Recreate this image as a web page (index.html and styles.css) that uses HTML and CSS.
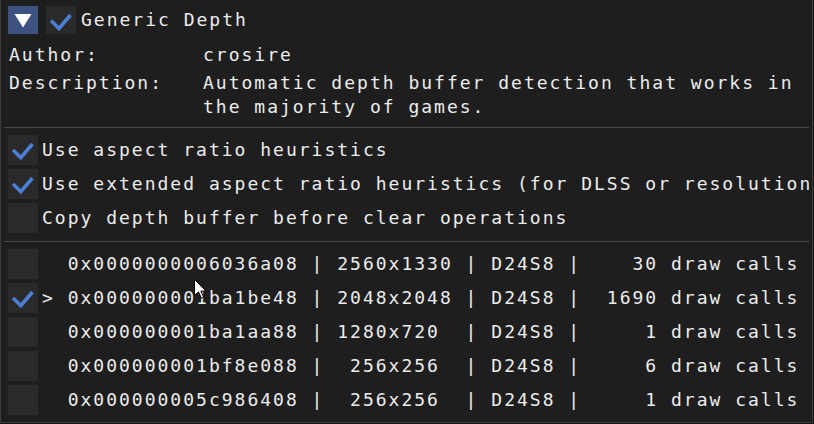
FILE: index.html
```
<!DOCTYPE html>
<html>
<head>
<meta charset="utf-8">
<link rel="stylesheet" href="styles.css">
</head>
<body>
<div class="window">
  <div class="content">
    <div class="header">
      <div class="tree-btn">
        <svg width="30" height="28" viewBox="0 0 30 28"><polygon points="6.5,8 23.5,8 15,21.5" fill="#ffffff"/></svg>
      </div>
      <div class="check hdr">
        <svg width="30" height="28" viewBox="0 0 30 28"><polyline points="5,14.5 13,22.5 24.5,9" fill="none" stroke="#4b7fd6" stroke-width="3.6"/></svg>
      </div>
      <span class="label">Generic Depth</span>
    </div>

    <div class="info">
      <div class="info-row"><span class="key">Author:</span><span class="val">crosire</span></div>
      <div class="info-row"><span class="key">Description:</span><span class="val wrap">Automatic depth buffer detection that works in the majority of games.</span></div>
    </div>

    <div class="sep"></div>

    <div class="list">
      <div class="row">
        <div class="check"><svg width="30" height="30" viewBox="0 0 30 30"><polyline points="5,15 12.8,22.6 24.5,9" fill="none" stroke="#4b7fd6" stroke-width="3.6"/></svg></div>
        <span class="label">Use aspect ratio heuristics</span>
      </div>
      <div class="row">
        <div class="check"><svg width="30" height="30" viewBox="0 0 30 30"><polyline points="5,15 12.8,22.6 24.5,9" fill="none" stroke="#4b7fd6" stroke-width="3.6"/></svg></div>
        <span class="label">Use extended aspect ratio heuristics (for DLSS or resolution scaling)</span>
      </div>
      <div class="row">
        <div class="check"></div>
        <span class="label">Copy depth buffer before clear operations</span>
      </div>
    </div>

    <div class="sep"></div>

    <div class="list">
      <div class="row">
        <div class="check"></div>
        <span class="label">  0x0000000006036a08 | 2560x1330 | D24S8 |    30 draw calls</span>
      </div>
      <div class="row">
        <div class="check"><svg width="30" height="30" viewBox="0 0 30 30"><polyline points="5,15 12.8,22.6 24.5,9" fill="none" stroke="#4b7fd6" stroke-width="3.6"/></svg></div>
        <span class="label">&gt; 0x000000001ba1be48 | 2048x2048 | D24S8 |  1690 draw calls</span>
      </div>
      <div class="row">
        <div class="check"></div>
        <span class="label">  0x000000001ba1aa88 | 1280x720  | D24S8 |     1 draw calls</span>
      </div>
      <div class="row">
        <div class="check"></div>
        <span class="label">  0x000000001bf8e088 |  256x256  | D24S8 |     6 draw calls</span>
      </div>
      <div class="row">
        <div class="check"></div>
        <span class="label">  0x000000005c986408 |  256x256  | D24S8 |     1 draw calls</span>
      </div>
    </div>
  </div>

  <svg class="cursor" width="14" height="21" viewBox="0 0 14 21">
    <path d="M0.5,0.5 L0.5,16.5 L4.5,12.8 L7.3,19.2 L9.6,18.2 L6.9,12 L12,12 Z" fill="#ffffff" stroke="#000000" stroke-width="1"/>
  </svg>
</div>
</body>
</html>
```

FILE: styles.css
```
html, body {
  margin: 0;
  padding: 0;
  background: #151515;
}

body {
  width: 814px;
  height: 424px;
  overflow: hidden;
}

.window {
  position: relative;
  box-sizing: border-box;
  width: 813px;
  height: 423px;
  background: #1e1e1e;
  border-left: 1px solid #3c3c3c;
  border-right: 1px solid #3c3c3c;
  border-bottom: 1px solid #3c3c3c;
  font-family: "DejaVu Sans Mono", "Liberation Mono", monospace;
  font-size: 18px;
  letter-spacing: 2px;
  line-height: 24px;
  color: #ececec;
}

.content {
  width: 808px;
  height: 100%;
  overflow: hidden;
  padding-top: 6px;
  box-sizing: border-box;
}

.header {
  display: flex;
  align-items: center;
  height: 28px;
  padding-left: 7px;
  gap: 8px;
}

.header .label {
  margin-left: -3px;
}

.tree-btn {
  width: 30px;
  height: 28px;
  background: #3d5280;
  flex: none;
}

.tree-btn svg, .check svg {
  display: block;
}

.check {
  width: 30px;
  height: 30px;
  background: #2a2a2a;
  flex: none;
}

.check.hdr {
  height: 28px;
}

.label {
  white-space: pre;
  flex: none;
}

.info {
  margin-top: 9px;
  padding-left: 8px;
  display: flex;
  flex-direction: column;
  gap: 4px;
}

.info-row {
  display: flex;
}

.key {
  width: 194px;
  flex: none;
  white-space: pre;
}

.val.wrap {
  width: 600px;
}

.sep {
  height: 1px;
  background: #4a4a4a;
  margin: 8px 0 0 3px;
}

.list {
  margin-top: 7px;
  padding-left: 7px;
  display: flex;
  flex-direction: column;
  gap: 4px;
}

.row {
  display: flex;
  align-items: center;
  height: 30px;
  gap: 4px;
}

.cursor {
  position: absolute;
  left: 193px;
  top: 279px;
}
```
